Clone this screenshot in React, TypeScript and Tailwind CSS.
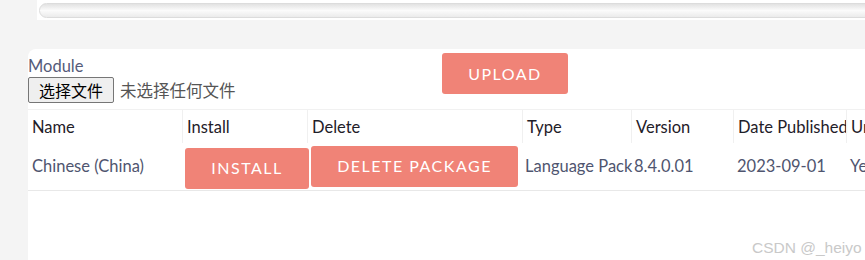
import React from 'react';

const cols = [
  { label: 'Name', w: 'w-[154px]' },
  { label: 'Install', w: 'w-[125px]' },
  { label: 'Delete', w: 'w-[215px]' },
  { label: 'Type', w: 'w-[109px]' },
  { label: 'Version', w: 'w-[102px]' },
  { label: 'Date Published', w: 'w-[113px]' },
  { label: 'Uninstallable', w: 'w-[120px]' },
];

export default function App() {
  return (
    <div className="relative h-[260px] w-[865px] overflow-hidden bg-[#f4f4f4] font-['Lato','Noto_Sans',sans-serif]">
      {/* progress trough at the top */}
      <div className="ml-[37px] h-[20px] bg-white pl-[2px] pt-[3px]">
        <div className="h-[15px] w-[860px] rounded-full border border-[#dcdcdc] bg-gradient-to-b from-[#e2e2e2] via-[#fbfbfb] to-[#ebebeb]" />
      </div>

      {/* module loader card */}
      <div className="ml-[28px] mt-[29px] h-[211px] w-[860px] rounded-tl-lg bg-white">
        <div className="flex">
          <div className="w-[414px] pt-[7px]">
            <div className="text-[16.5px] leading-[20px] text-[#555b7a]">Module</div>
            <div className="mt-[1px] flex items-center">
              <button className="h-[26px] w-[86px] rounded-[2px] border border-[#767676] bg-[#efefef] font-['Noto_Sans_CJK_SC',sans-serif] text-[16px] leading-none text-black">
                选择文件
              </button>
              <span className="ml-[6px] font-['Noto_Sans_CJK_SC',sans-serif] text-[16.5px] text-[#555]">未选择任何文件</span>
            </div>
          </div>
          <button className="mt-[4px] h-[41px] w-[126px] rounded-[3px] bg-[#f08377] text-[16px] tracking-[1.5px] text-white">
            UPLOAD
          </button>
        </div>

        <div className="mt-[6px]">
          <div className="flex h-[34px] border-t border-[#f1f1f1]">
            {cols.map((c, i) => (
              <div
                key={c.label}
                className={`${c.w} shrink-0 whitespace-nowrap pl-[4px] pt-[7px] text-[16.5px] leading-[20px] text-[#1f2029] ${i > 0 ? 'border-l border-[#f0f0f0]' : ''}`}
              >
                {c.label}
              </div>
            ))}
          </div>
          <div className="flex h-[48px] items-center border-b border-[#e8e8e8] text-[16.5px] text-[#4f556f]">
            <div className="w-[154px] shrink-0 pl-[4px]">Chinese (China)</div>
            <div className="w-[125px] shrink-0 pl-[3px]">
              <button className="mt-[3px] h-[41px] w-[124px] rounded-[3px] bg-[#f08377] text-[16px] tracking-[1.5px] text-white">
                INSTALL
              </button>
            </div>
            <div className="w-[215px] shrink-0 pl-[4px]">
              <button className="-mt-[1px] h-[41px] w-[207px] rounded-[3px] bg-[#f08377] text-[16px] tracking-[1.5px] text-white">
                DELETE PACKAGE
              </button>
            </div>
            <div className="w-[109px] shrink-0 whitespace-nowrap pl-[3px]">Language Pack</div>
            <div className="w-[102px] shrink-0 pl-[3px]">8.4.0.01</div>
            <div className="w-[113px] shrink-0 pl-[4px]">2023-09-01</div>
            <div className="shrink-0 pl-[4px]">Yes</div>
          </div>
        </div>
      </div>

      <div className="absolute left-[752px] top-[236px] font-['Liberation_Sans',sans-serif] text-[15.5px] text-[#c9c9c9]">
        CSDN @_heiyo
      </div>
    </div>
  );
}
